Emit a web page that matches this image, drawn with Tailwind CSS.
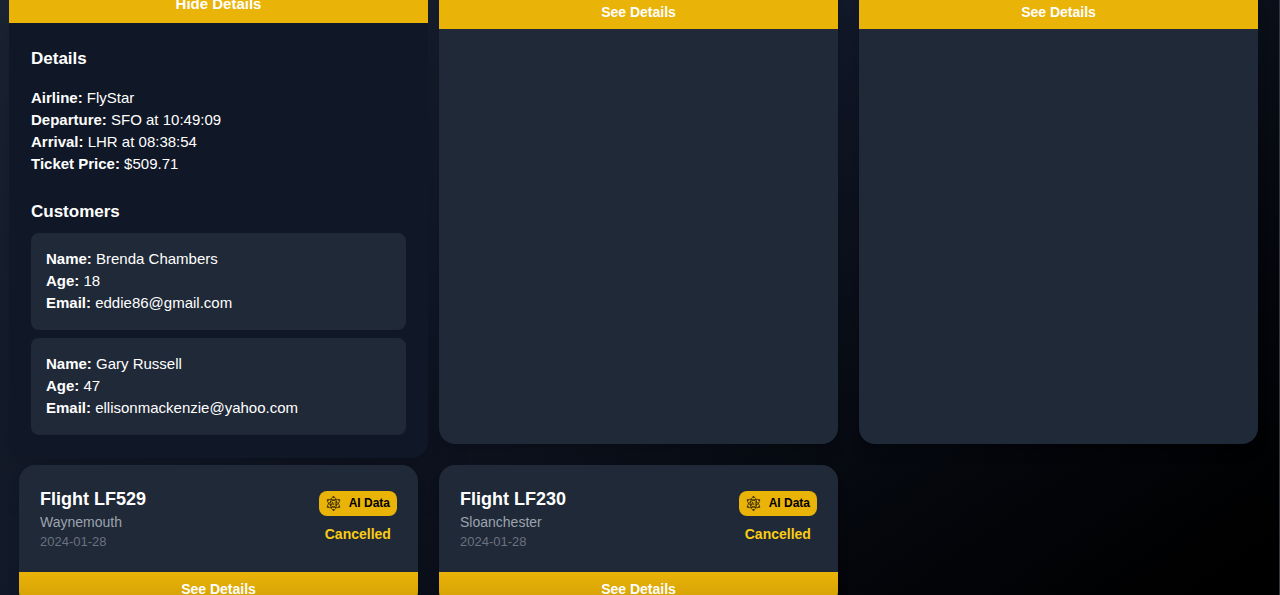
<!DOCTYPE html>
<html lang="en">
<head>
<meta charset="utf-8">
<title>Flights</title>
<script src="https://cdn.jsdelivr.net/npm/@tailwindcss/browser@4"></script>
</head>
<body class="h-screen overflow-hidden border-r border-[#333840] bg-[linear-gradient(145deg,#1a2432_0%,#111827_40%,#04060b_78%,#000000_96%)] font-['Liberation_Sans',Arial,sans-serif] text-white">
<svg class="hidden" aria-hidden="true">
  <symbol id="atom" viewBox="0 0 24 24" fill="none" stroke="currentColor" stroke-width="0.9">
    <ellipse cx="12" cy="12" rx="10.500" ry="5" transform="rotate(30 12 12)"/>
    <ellipse cx="12" cy="12" rx="10.500" ry="5" transform="rotate(90 12 12)"/>
    <ellipse cx="12" cy="12" rx="10.500" ry="5" transform="rotate(150 12 12)"/>
    <path d="M8.500 14.500l2-5 2 5M9.300 13h2.400M14.800 9.500v5"/>
    <circle cx="12" cy="1.500" r="1"/><circle cx="2.800" cy="6.500" r="1"/><circle cx="21.200" cy="6.500" r="1"/>
    <circle cx="2.800" cy="17.500" r="1"/><circle cx="21.200" cy="17.500" r="1"/><circle cx="12" cy="22.500" r="1"/>
  </symbol>
</svg>
<main class="-mt-[14px] grid grid-cols-3 gap-x-[21px] gap-y-[21px] pr-[21px] pl-[19px]">
  <article class="-mx-[10px] -mb-[14px] rounded-b-2xl bg-[#101726] text-[15px] shadow-2xl">
    <button class="block w-full bg-[#eab308] pt-[7px] pb-[9px] leading-[21px] font-bold">Hide Details</button>
    <div class="px-[22px] pt-[23px] pb-[23px]">
      <h3 class="text-[17px] leading-[26px] font-bold">Details</h3>
      <div class="mt-[15px] leading-[22px]">
        <p><strong>Airline:</strong> FlyStar</p>
        <p><strong>Departure:</strong> SFO at 10:49:09</p>
        <p><strong>Arrival:</strong> LHR at 08:38:54</p>
        <p><strong>Ticket Price:</strong> $509.71</p>
      </div>
      <h3 class="mt-6 mb-2 text-[17px] leading-[26px] font-bold">Customers</h3>
      <ul class="flex flex-col gap-2 leading-[22px]">
        <li class="rounded-lg bg-[#1f2937] px-[15px] pt-[15px] pb-4">
          <p><strong>Name:</strong> Brenda Chambers</p>
          <p><strong>Age:</strong> 18</p>
          <p><strong>Email:</strong> eddie86@gmail.com</p>
        </li>
        <li class="rounded-lg bg-[#1f2937] px-[15px] pt-[15px] pb-4">
          <p><strong>Name:</strong> Gary Russell</p>
          <p><strong>Age:</strong> 47</p>
          <p><strong>Email:</strong> ellisonmackenzie@yahoo.com</p>
        </li>
      </ul>
    </div>
  </article>
  <article class="mt-2 rounded-b-2xl bg-[#1f2937] text-[14px] shadow-lg">
    <button class="block w-full bg-[#eab308] pt-2 pb-[6px] leading-[21px] font-bold">See Details</button>
  </article>
  <article class="mt-2 rounded-b-2xl bg-[#1f2937] text-[14px] shadow-lg">
    <button class="block w-full bg-[#eab308] pt-2 pb-[6px] leading-[21px] font-bold">See Details</button>
  </article>
  <article class="overflow-hidden rounded-2xl bg-[#1f2937] text-[14px] shadow-lg">
    <div class="flex items-start justify-between px-[21px] pt-[21px] pb-[21px]">
      <div>
        <h2 class="text-[18px] leading-[26px] font-bold">Flight LF529</h2>
        <p class="leading-[21px] text-[#9ca3af]">Waynemouth</p>
        <p class="text-[13px] leading-[18px] text-[#6b7280]">2024-01-28</p>
      </div>
      <div class="flex flex-col items-center gap-2 pt-[5px]">
        <button class="flex items-center gap-2 rounded-lg bg-[#eab308] px-[7px] py-[3px] text-[12px] leading-[19px] font-bold text-black"><svg class="size-[15px]"><use href="#atom"/></svg>AI Data</button>
        <span class="leading-[21px] font-bold text-[#facc15]">Cancelled</span>
      </div>
    </div>
    <button class="block w-full bg-linear-to-b from-[#eab308] to-[#cf9d05] py-[7px] leading-[21px] font-bold">See Details</button>
  </article>
  <article class="overflow-hidden rounded-2xl bg-[#1f2937] text-[14px] shadow-lg">
    <div class="flex items-start justify-between px-[21px] pt-[21px] pb-[21px]">
      <div>
        <h2 class="text-[18px] leading-[26px] font-bold">Flight LF230</h2>
        <p class="leading-[21px] text-[#9ca3af]">Sloanchester</p>
        <p class="text-[13px] leading-[18px] text-[#6b7280]">2024-01-28</p>
      </div>
      <div class="flex flex-col items-center gap-2 pt-[5px]">
        <button class="flex items-center gap-2 rounded-lg bg-[#eab308] px-[7px] py-[3px] text-[12px] leading-[19px] font-bold text-black"><svg class="size-[15px]"><use href="#atom"/></svg>AI Data</button>
        <span class="leading-[21px] font-bold text-[#facc15]">Cancelled</span>
      </div>
    </div>
    <button class="block w-full bg-linear-to-b from-[#eab308] to-[#cf9d05] py-[7px] leading-[21px] font-bold">See Details</button>
  </article>
</main>
</body>
</html>
